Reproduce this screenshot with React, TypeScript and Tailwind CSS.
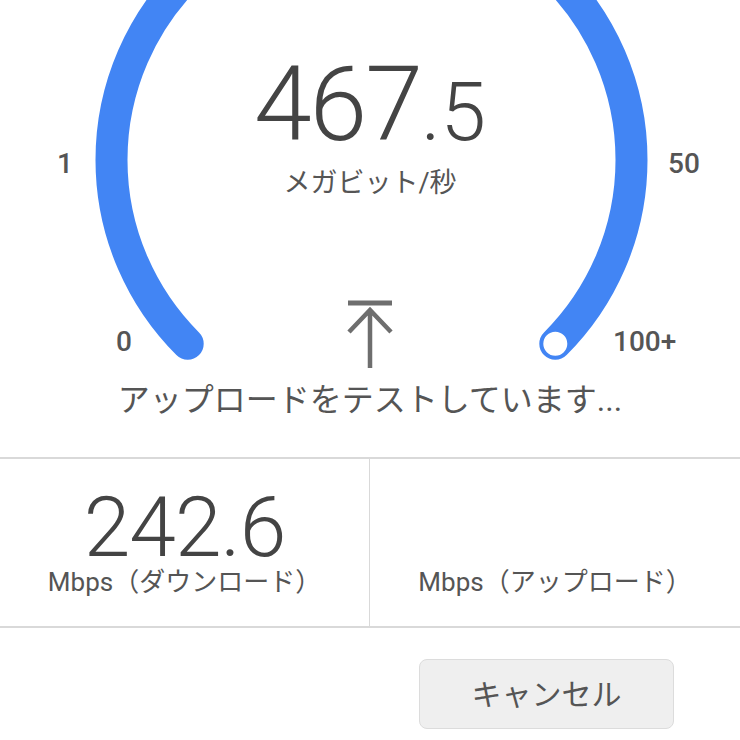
const FONT = { fontFamily: 'Roboto, "Noto Sans CJK JP", sans-serif' }

function Gauge() {
  return (
    <svg className="absolute inset-0" width="740" height="457" viewBox="0 0 740 457">
      <path
        d="M 187.7 343.8 A 260 260 0 1 1 555.3 343.8"
        fill="none"
        stroke="#4285f4"
        strokeWidth="32"
        strokeLinecap="round"
      />
      <circle cx="555.3" cy="343.8" r="13" fill="#fff" stroke="#4285f4" strokeWidth="2" />
    </svg>
  )
}

function UploadArrow() {
  return (
    <svg width="50" height="72" viewBox="0 0 50 72" className="block">
      <path d="M3 5h44" stroke="#6e6e6e" strokeWidth="5" fill="none" />
      <path d="M25 12v58M4 34L25 12l21 22" stroke="#6e6e6e" strokeWidth="4.5" fill="none" />
    </svg>
  )
}

export default function App() {
  const ticks = [
    { label: '1', cls: 'left-[35px] top-[148px]' },
    { label: '50', cls: 'left-[654px] top-[148px]' },
    { label: '0', cls: 'left-[94px] top-[326px]' },
    { label: '100+', cls: 'left-[613px] top-[326px]' },
  ]

  return (
    <div className="w-[740px] h-[740px] bg-white overflow-hidden text-[#555]" style={FONT}>
      <div className="relative h-[457px]">
        <Gauge />
        {ticks.map((t) => (
          <div
            key={t.label}
            className={`absolute w-[60px] text-center text-[28px] leading-[32px] font-medium text-[#555] ${t.cls}`}
          >
            {t.label}
          </div>
        ))}

        <div className="relative flex flex-col items-center pt-[53px]">
          <div className="flex items-baseline font-light text-[#444] leading-none">
            <span className="text-[104px] tracking-[-2px]">467</span>
            <span className="text-[82px]">.5</span>
          </div>
          <div className="mt-[11px] text-[27px] leading-[30px] text-[#555]">メガビット/秒</div>
          <div className="mt-[100px]">
            <UploadArrow />
          </div>
          <div className="mt-[12px] text-[32px] leading-[36px] text-[#555]">
            アップロードをテストしています...
          </div>
        </div>
      </div>

      <div className="grid grid-cols-2 h-[171px] border-y-2 border-[#d9d9d9]">
        <div className="flex flex-col items-center justify-end border-r border-[#d9d9d9] pb-[32px]">
          <div className="text-[84px] leading-none font-light text-[#444] tracking-[-1px]">242.6</div>
          <div className="text-[26px] leading-[24px]">Mbps（ダウンロード）</div>
        </div>
        <div className="flex flex-col items-center justify-end pb-[32px]">
          <div className="text-[26px] leading-[24px]">Mbps（アップロード）</div>
        </div>
      </div>

      <div className="flex justify-end pr-[66px] pt-[31px]">
        <button className="w-[255px] h-[70px] rounded-lg bg-[#efefef] border border-[#dcdcdc] text-[30px] text-[#555]">
          キャンセル
        </button>
      </div>
    </div>
  )
}
